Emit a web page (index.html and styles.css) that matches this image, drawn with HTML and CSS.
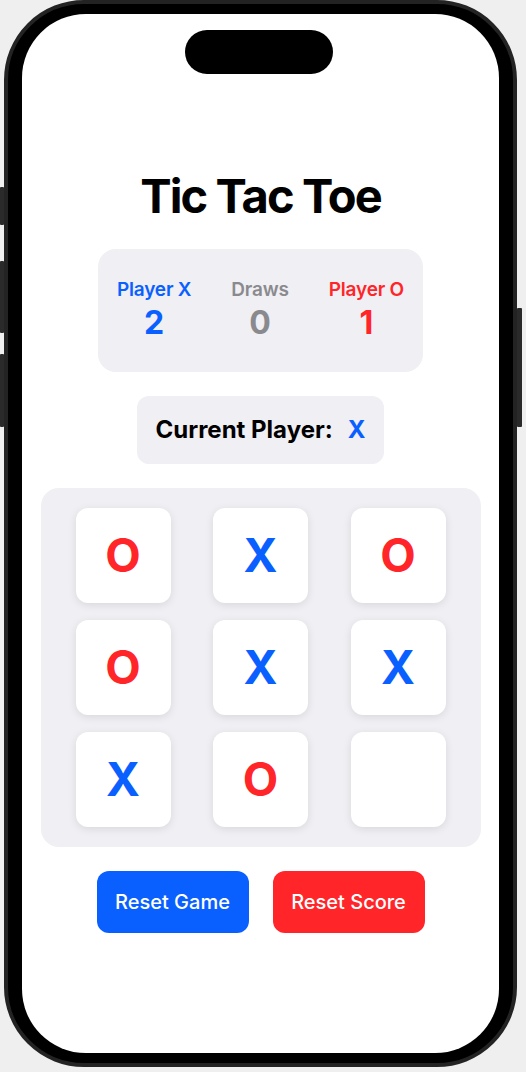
FILE: index.html
```html
<!DOCTYPE html>
<html lang="en">
<head>
<meta charset="utf-8">
<title>Tic Tac Toe</title>
<link rel="stylesheet" href="styles.css">
</head>
<body>
<div class="phone">
  <span class="btn-side vol-silent"></span>
  <span class="btn-side vol-up"></span>
  <span class="btn-side vol-down"></span>
  <span class="btn-side power"></span>
  <div class="screen">
    <div class="island"></div>
    <h1 class="title">Tic Tac Toe</h1>
    <div class="scores">
      <div class="score">
        <span class="score-label blue">Player X</span>
        <span class="score-value blue">2</span>
      </div>
      <div class="score">
        <span class="score-label gray">Draws</span>
        <span class="score-value gray">0</span>
      </div>
      <div class="score">
        <span class="score-label red">Player O</span>
        <span class="score-value red">1</span>
      </div>
    </div>
    <div class="current">
      <span>Current Player:</span>
      <span class="blue">X</span>
    </div>
    <div class="board">
      <div class="cell red">O</div>
      <div class="cell blue">X</div>
      <div class="cell red">O</div>
      <div class="cell red">O</div>
      <div class="cell blue">X</div>
      <div class="cell blue">X</div>
      <div class="cell blue">X</div>
      <div class="cell red">O</div>
      <div class="cell"></div>
    </div>
    <div class="actions">
      <button class="action action-blue">Reset Game</button>
      <button class="action action-red">Reset Score</button>
    </div>
  </div>
</div>
</body>
</html>
```

FILE: styles.css
```css
* { box-sizing: border-box; }

html, body {
  margin: 0;
  padding: 0;
  background: #efefef;
  font-family: Inter, "Noto Sans", "Liberation Sans", sans-serif;
}

body {
  width: 526px;
  height: 1072px;
  overflow: hidden;
}

.phone {
  position: relative;
  margin-left: 4px;
  width: 513px;
  height: 1067px;
  background: #000;
  border: 4px solid #232323;
  border-radius: 80px;
  padding: 10px 14px;
}

.btn-side {
  position: absolute;
  background: #2a2a2a;
  border-radius: 1px;
}
.vol-silent { left: -8px; top: 183px; width: 4px; height: 38px; }
.vol-up { left: -8px; top: 257px; width: 4px; height: 72px; }
.vol-down { left: -8px; top: 350px; width: 4px; height: 73px; }
.power { right: -9px; top: 304px; width: 5px; height: 119px; }

.screen {
  position: relative;
  width: 100%;
  height: 100%;
  background: #fff;
  border-radius: 64px;
  display: flex;
  flex-direction: column;
  align-items: center;
  gap: 24px;
  padding-top: 153px;
}

.island {
  position: absolute;
  top: 16px;
  left: 163px;
  width: 148px;
  height: 44px;
  border-radius: 22px;
  background: #000;
}

.title {
  margin: 0;
  font-size: 47px;
  line-height: 57.6px;
  font-weight: 700;
  color: #000;
  letter-spacing: -1.9px;
}

.blue { color: #0a60ff; }
.red { color: #ff2529; }
.gray { color: #8a8a8e; }

.scores {
  width: 325px;
  height: 123px;
  background: #efeff4;
  border-radius: 18px;
  display: flex;
  justify-content: space-between;
  align-items: center;
  padding: 0 19px;
}

.score {
  display: flex;
  flex-direction: column;
  align-items: center;
  gap: 2px;
}

.score-label {
  font-size: 19px;
  line-height: 24px;
  font-weight: 600;
  letter-spacing: -0.2px;
}

.score-value {
  font-size: 32px;
  line-height: 38px;
  font-weight: 700;
}

.current {
  height: 68px;
  background: #efeff4;
  border-radius: 12px;
  display: flex;
  align-items: center;
  gap: 15px;
  padding: 0 19px;
  font-size: 24px;
  font-weight: 700;
  color: #000;
}

.board {
  width: 440px;
  height: 359px;
  background: #efeff4;
  border-radius: 18px;
  padding: 20px 35px;
  display: grid;
  grid-template-columns: repeat(3, 95px);
  grid-template-rows: repeat(3, 95px);
  justify-content: space-between;
  align-content: space-between;
}

.cell {
  background: #fff;
  border-radius: 12px;
  box-shadow: 0 2px 8px rgba(0, 0, 0, 0.1);
  display: flex;
  align-items: center;
  justify-content: center;
  font-size: 46px;
  font-weight: 700;
}

.actions {
  display: flex;
  gap: 24px;
}

.action {
  width: 152px;
  height: 62px;
  border: none;
  border-radius: 12px;
  color: #fff;
  font-family: inherit;
  font-size: 20px;
  font-weight: 500;
  padding: 0;
}

.action-blue { background: #0a60ff; }
.action-red { background: #ff2529; }
```
